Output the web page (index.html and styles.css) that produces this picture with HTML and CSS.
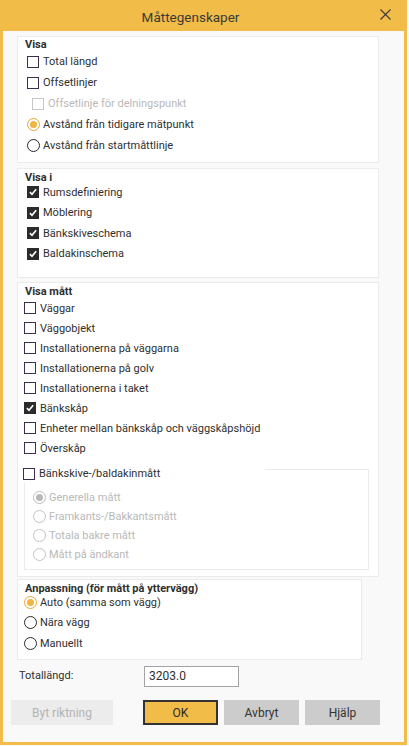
FILE: index.html
```html
<!DOCTYPE html>
<html>
<head>
<meta charset="utf-8">
<link rel="stylesheet" href="styles.css">
</head>
<body>
<div class="window">
  <div class="titlebar">
    <span class="title">Måttegenskaper</span>
    <svg class="close" width="11" height="11" viewBox="0 0 11 11"><path d="M0.5 0.5 L10.5 10.5 M10.5 0.5 L0.5 10.5" stroke="#3a3a3a" stroke-width="1.1" fill="none"/></svg>
  </div>
  <div class="content">
    <div class="group g1">
      <div class="heading">Visa</div>
      <div class="row r21"><span class="cb"></span>Total längd</div>
      <div class="row r21"><span class="cb"></span>Offsetlinjer</div>
      <div class="row r21 indent disabled"><span class="cb"></span>Offsetlinje för delningspunkt</div>
      <div class="row r21"><span class="rb on"></span>Avstånd från tidigare mätpunkt</div>
      <div class="row r21"><span class="rb"></span>Avstånd från startmåttlinje</div>
    </div>
    <div class="group g2">
      <div class="heading">Visa i</div>
      <div class="row r205"><span class="cb checked"><svg viewBox="0 0 12 12" width="12" height="12"><path d="M2.3 6.2 L4.8 8.8 L9.8 2.8" stroke="#fff" stroke-width="2" fill="none"/></svg></span>Rumsdefiniering</div>
      <div class="row r205"><span class="cb checked"><svg viewBox="0 0 12 12" width="12" height="12"><path d="M2.3 6.2 L4.8 8.8 L9.8 2.8" stroke="#fff" stroke-width="2" fill="none"/></svg></span>Möblering</div>
      <div class="row r205"><span class="cb checked"><svg viewBox="0 0 12 12" width="12" height="12"><path d="M2.3 6.2 L4.8 8.8 L9.8 2.8" stroke="#fff" stroke-width="2" fill="none"/></svg></span>Bänkskiveschema</div>
      <div class="row r205"><span class="cb checked"><svg viewBox="0 0 12 12" width="12" height="12"><path d="M2.3 6.2 L4.8 8.8 L9.8 2.8" stroke="#fff" stroke-width="2" fill="none"/></svg></span>Baldakinschema</div>
    </div>
    <div class="group g3">
      <div class="heading">Visa mått</div>
      <div class="row r20"><span class="cb"></span>Väggar</div>
      <div class="row r20"><span class="cb"></span>Väggobjekt</div>
      <div class="row r20"><span class="cb"></span>Installationerna på väggarna</div>
      <div class="row r20"><span class="cb"></span>Installationerna på golv</div>
      <div class="row r20"><span class="cb"></span>Installationerna i taket</div>
      <div class="row r20"><span class="cb checked"><svg viewBox="0 0 12 12" width="12" height="12"><path d="M2.3 6.2 L4.8 8.8 L9.8 2.8" stroke="#fff" stroke-width="2" fill="none"/></svg></span>Bänkskåp</div>
      <div class="row r20"><span class="cb"></span>Enheter mellan bänkskåp och väggskåpshöjd</div>
      <div class="row r20"><span class="cb"></span>Överskåp</div>
      <div class="subgroup">
        <div class="legend row"><span class="cb"></span>Bänkskive-/baldakinmått</div>
        <div class="row r19 disabled"><span class="rb on"></span>Generella mått</div>
        <div class="row r19 disabled"><span class="rb"></span>Framkants-/Bakkantsmått</div>
        <div class="row r19 disabled"><span class="rb"></span>Totala bakre mått</div>
        <div class="row r19 disabled"><span class="rb"></span>Mått på ändkant</div>
      </div>
    </div>
    <div class="group g4">
      <div class="heading">Anpassning (för mått på yttervägg)</div>
      <div class="row r205"><span class="rb on"></span>Auto (samma som vägg)</div>
      <div class="row r205"><span class="rb"></span>Nära vägg</div>
      <div class="row r205"><span class="rb"></span>Manuellt</div>
    </div>
    <div class="total">
      <span class="total-label">Totallängd:</span>
      <span class="input">3203.0</span>
    </div>
    <div class="buttons">
      <span class="btn btn-disabled">Byt riktning</span>
      <span class="btn btn-ok">OK</span>
      <span class="btn btn-grey">Avbryt</span>
      <span class="btn btn-grey">Hjälp</span>
    </div>
  </div>
</div>
</body>
</html>
```
FILE: styles.css
```css
* { box-sizing: border-box; }
html, body { margin: 0; padding: 0; background: #f9f9f9; }
body {
  width: 409px;
  height: 746px;
  font-family: Roboto, "Noto Sans", "Liberation Sans", sans-serif;
  font-size: 11px;
  color: #2f2f2f;
  overflow: hidden;
}
.window {
  width: 407px;
  height: 745px;
  border: 3px solid #f2bc48;
  border-top: none;
  background: #f9f9f9;
  display: flex;
  flex-direction: column;
}
.titlebar {
  height: 31px;
  background: #f2bc48;
  margin: 0 -3px;
  display: flex;
  align-items: center;
  justify-content: center;
  position: relative;
}
.title {
  font-size: 13.5px;
  color: #3a3a3a;
  margin-left: -26px;
  margin-top: 2px;
}
.close {
  position: absolute;
  right: 16px;
  top: 9px;
}
.content {
  padding: 5px 0 0 14px;
  display: flex;
  flex-direction: column;
}
.group {
  background: #fff;
  border: 1px solid #ebebeb;
  width: 362px;
  padding: 0 0 0 7px;
}
.heading {
  font-weight: bold;
  height: 14px;
  line-height: 14px;
}
.row {
  display: flex;
  align-items: center;
  white-space: nowrap;
}
.r21 { height: 21px; }
.r205 { height: 20.5px; }
.r20 { height: 20px; }
.r19 { height: 19px; }
.cb {
  width: 12px;
  height: 12px;
  border: 1px solid #3d2e4d;
  background: #fff;
  margin: 0 4px 0 2px;
  flex: none;
  display: flex;
  align-items: center;
  justify-content: center;
}
.cb.checked {
  background: #2b2b2b;
  border-color: #2b2b2b;
}
.cb svg { display: block; }
.rb {
  width: 13px;
  height: 13px;
  border: 1px solid #2a2a2a;
  border-radius: 50%;
  background: #fff;
  margin: 0 3px 0 2px;
  flex: none;
  position: relative;
}
.rb.on {
  border-color: #e8a838;
}
.rb.on::after {
  content: "";
  position: absolute;
  left: 2px;
  top: 2px;
  width: 7px;
  height: 7px;
  border-radius: 50%;
  background: #f0b542;
}
.indent { padding-left: 5px; }
.disabled { color: #b9b9b9; }
.disabled .cb { border-color: #c6c6c6; }
.disabled .rb { border-color: #c2c2c2; }
.disabled .rb.on { border-color: #bcbcbc; }
.disabled .rb.on::after { background: #b8b8b8; }

.g1 { height: 127px; }
.g1 .heading { margin-top: 1px; margin-bottom: -1px; }

.g2 { margin-top: 5px; height: 110px; }
.g2 .heading { margin-top: 2px; margin-bottom: -3px; }

.g3 { margin-top: 4px; height: 295px; padding-left: 4px; }
.g3 .heading { margin-top: 2px; margin-bottom: -1px; margin-left: 3px; }
.subgroup {
  margin-top: 11px;
  width: 345px;
  margin-left: 2px;
  border: 1px solid #ebebeb;
  height: 101px;
  position: relative;
  padding: 18px 0 0 6px;
}
.subgroup .legend {
  position: absolute;
  left: -4px;
  top: -6px;
  height: 19px;
  width: 244px;
  background: #fff;
}
.g4 {
  margin-top: 2px;
  width: 345px;
  height: 81px;
  padding-left: 4px;
}
.g4 .heading { margin-top: 2px; margin-left: 3px; margin-bottom: -4px; }

.total {
  display: flex;
  align-items: center;
  height: 21px;
  margin-top: 6px;
}
.total-label {
  width: 127px;
  padding-left: 2px;
  margin-top: -2px;
}
.input {
  width: 95px;
  height: 21px;
  border: 1px solid #a3a3a3;
  background: #fff;
  padding-left: 4px;
  line-height: 19px;
  font-size: 12px;
}
.buttons {
  display: flex;
  margin-top: 13px;
  margin-left: -6px;
  height: 25px;
}
.btn {
  height: 25px;
  display: flex;
  align-items: center;
  justify-content: center;
  font-size: 12px;
}
.btn-disabled {
  width: 102px;
  background: #ececec;
  color: #b3b3b3;
  margin-right: 30px;
}
.btn-ok {
  width: 75px;
  background: #f2bc48;
  border: 2px solid #333;
  color: #2a2a2a;
  margin-right: 6px;
}
.btn-grey {
  width: 75px;
  background: #cccccc;
  color: #333;
  margin-right: 6px;
}
```
